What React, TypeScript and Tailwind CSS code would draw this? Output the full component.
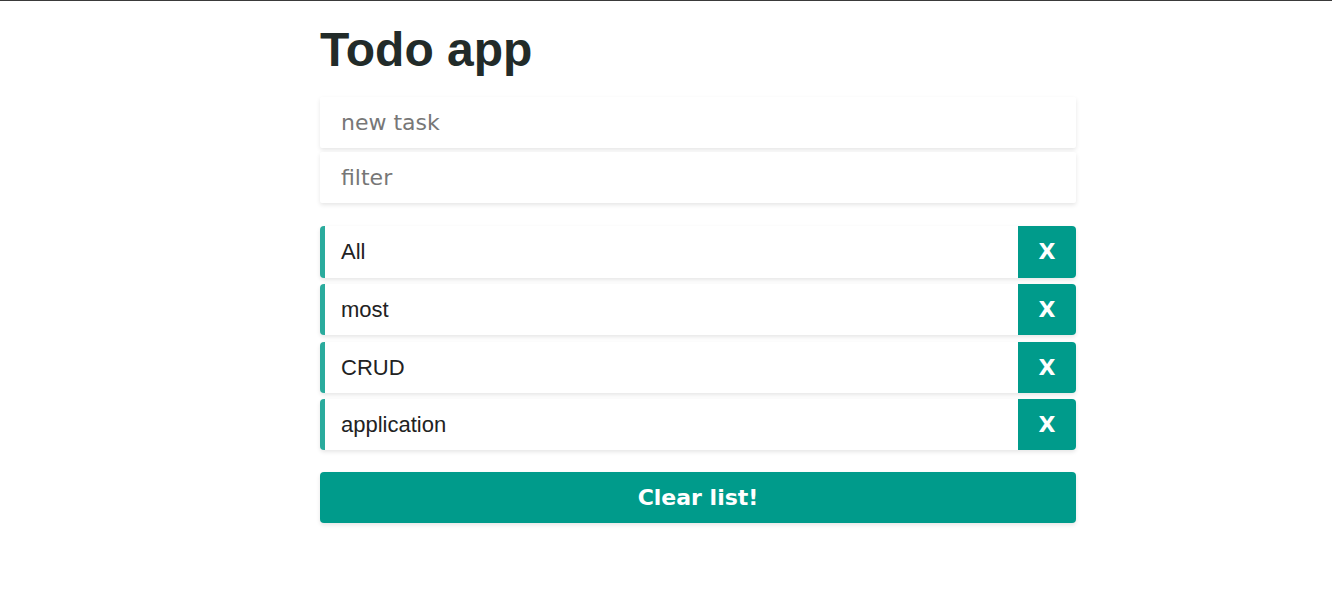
import { useState } from "react";

const initialTasks = ["All", "most", "CRUD", "application"];

export default function App() {
  const [tasks, setTasks] = useState(initialTasks);
  const [newTask, setNewTask] = useState("");
  const [filter, setFilter] = useState("");

  const visible = tasks.filter((task) =>
    task.toLowerCase().includes(filter.toLowerCase().trim()),
  );

  return (
    <div className="min-h-screen border-t border-[#3a3a3a] bg-white">
      <div className="ml-[320px] flex w-[756px] flex-col pt-[21px]">
        <h1 className="mb-[19px] text-[48px] font-bold leading-[56px] text-[#222b29] [font-family:'Liberation_Sans',Arial,sans-serif]">
          Todo app
        </h1>

        <form
          className="flex flex-col gap-[4px]"
          onSubmit={(event) => {
            event.preventDefault();
            if (!newTask.trim()) return;
            setTasks([...tasks, newTask.trim()]);
            setNewTask("");
          }}
        >
          <input
            value={newTask}
            onChange={(event) => setNewTask(event.target.value)}
            placeholder="new task"
            className="h-[51.2px] w-full rounded-[2px] bg-white px-[21px] text-[22px] text-[#222] shadow-[0_2px_4px_rgba(0,0,0,0.1)] outline-none placeholder:text-[#777] [font-family:'DejaVu_Sans',sans-serif]"
          />
          <input
            value={filter}
            onChange={(event) => setFilter(event.target.value)}
            placeholder="filter"
            className="h-[51.2px] w-full rounded-[2px] bg-white px-[21px] text-[22px] text-[#222] shadow-[0_2px_4px_rgba(0,0,0,0.1)] outline-none placeholder:text-[#777] [font-family:'DejaVu_Sans',sans-serif]"
          />
        </form>

        <ul className="mt-[23px] flex flex-col gap-[6.4px]">
          {visible.map((task) => (
            <li
              key={task}
              className="flex h-[51.2px] items-stretch overflow-hidden rounded-[4px] border-l-[5px] border-[#2aab9d] bg-white shadow-[0_2px_4px_rgba(0,0,0,0.1)]"
            >
              <span className="flex flex-1 items-center pl-[16px] text-[22px] text-[#222] [font-family:'Liberation_Sans',Arial,sans-serif]">
                {task}
              </span>
              <button
                type="button"
                onClick={() => setTasks(tasks.filter((item) => item !== task))}
                className="w-[58px] bg-[#009b8b] text-[22px] font-bold text-white [font-family:'DejaVu_Sans',sans-serif]"
              >
                X
              </button>
            </li>
          ))}
        </ul>

        <button
          type="button"
          onClick={() => setTasks([])}
          className="mt-[22px] h-[51.2px] w-full rounded-[4px] bg-[#009b8b] text-[22px] font-bold text-white shadow-[0_2px_4px_rgba(0,0,0,0.1)] [font-family:'DejaVu_Sans',sans-serif]"
        >
          Clear list!
        </button>
      </div>
    </div>
  );
}
